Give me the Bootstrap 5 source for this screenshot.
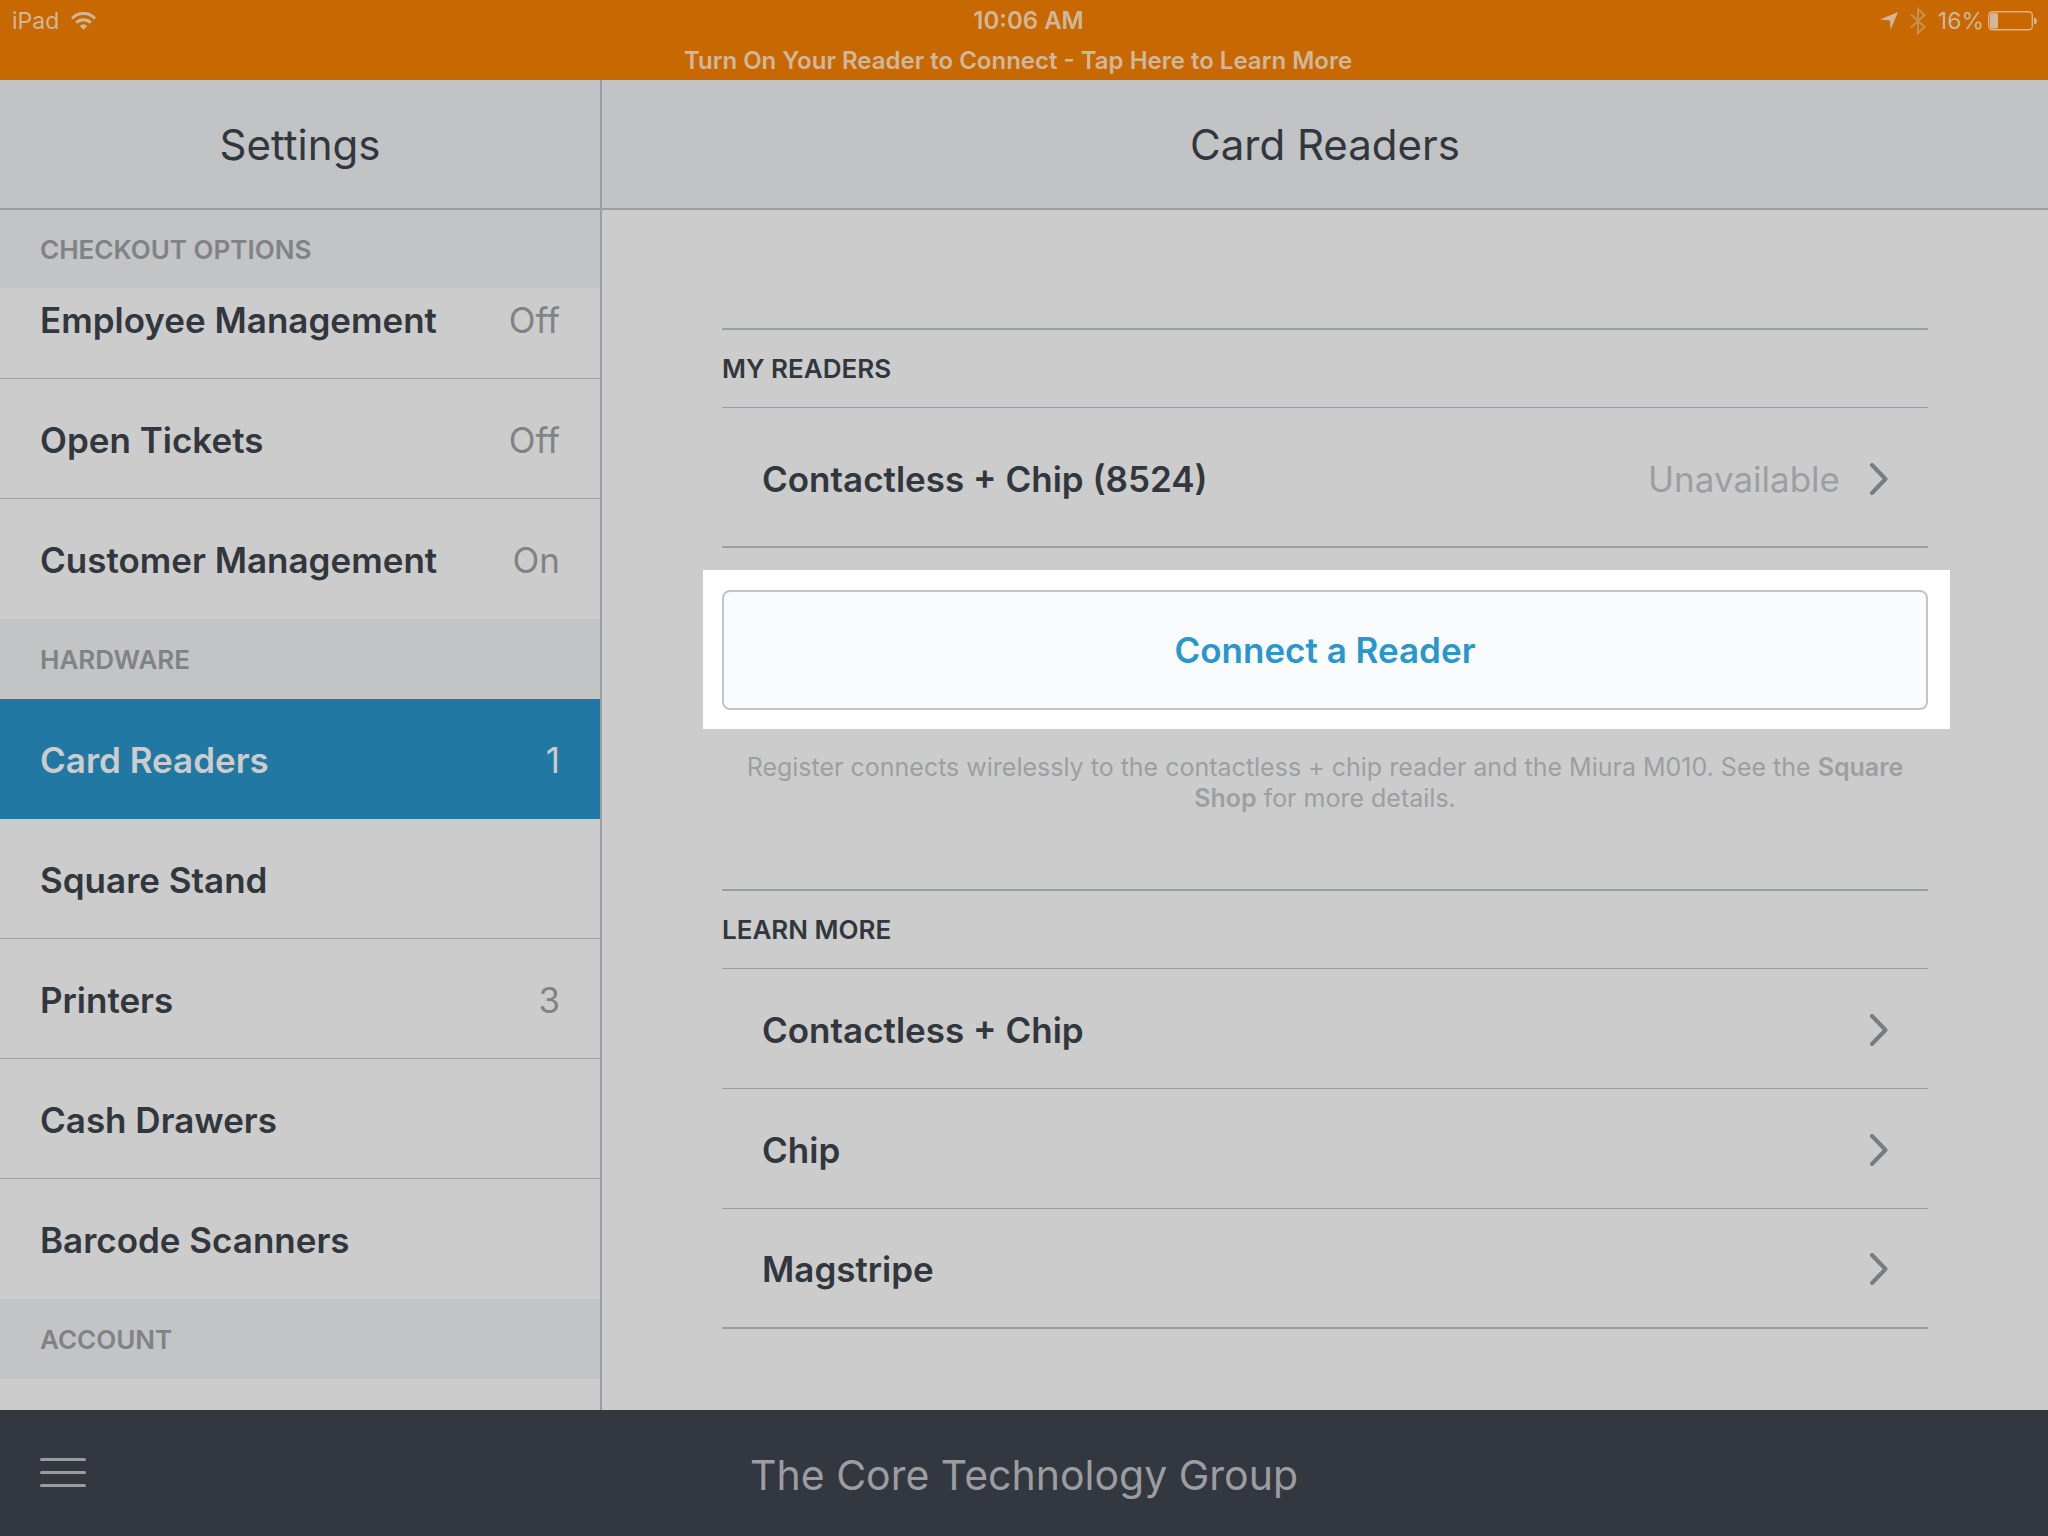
<!DOCTYPE html>
<html lang="en">
<head>
<meta charset="utf-8">
<meta name="viewport" content="width=device-width, initial-scale=1">
<title>Settings – Card Readers</title>
<link href="https://cdn.jsdelivr.net/npm/bootstrap@5.3.0/dist/css/bootstrap.min.css" rel="stylesheet">
<style>
  :root { --ink: #31373d; --line: #9a9ea3; --muted: #7f8385; --soft: #9b9fa3; --page: #ccc; --bar: #c2c3c5; }
  body { font-family: Inter, "Liberation Sans", sans-serif; background: var(--page); color: var(--ink); }
  a { color: inherit; text-decoration: none; }
  svg { display: block; flex: none; }

  .status { background: #c86800; color: #d0b79b; font-size: 23px; line-height: 42px; }
  .status-side { flex: 1 1 0; }
  .status-icons { gap: 12px; padding-right: 11px; }
  .notice { font-weight: 600; font-size: 24px; }
  .notice-bar { line-height: 38px; padding-right: 12px; }

  .sidebar { width: 602px; border-right: 2px solid var(--line); }
  .title-bar { height: 130px; padding-top: 2px; background: var(--bar); border-bottom: 2px solid var(--line); }
  .title-bar h1 { font-size: 42px; line-height: 48px; font-weight: 400; }

  .group-label { height: 80px; padding: 0 40px; background: #c3c4c6; color: var(--muted); font-size: 26px; font-weight: 600; }
  .group-label.pinned { height: 78px; margin-bottom: -29px; }
  .setting { height: 120px; padding: 2px 40px 0; font-size: 35px; line-height: 44px; font-weight: 600; border-bottom: 1px solid var(--line); }
  .setting.last { border-bottom: 0; }
  .setting.current { background: #2178a3; color: var(--page); border-bottom: 0; }
  .setting .state { font-weight: 400; color: var(--muted); }
  .setting.current .state { color: var(--page); }

  .detail { padding: 118px 120px 80px; }
  .reader-list { border-top: 2px solid var(--line); border-bottom: 2px solid var(--line); }
  .reader-list h2 { height: 77px; font-size: 26px; font-weight: 600; }
  .reader-row { height: 120px; padding: 2px 40px 0; border-top: 1px solid var(--line); font-size: 35px; line-height: 44px; font-weight: 600; }
  .reader-row:last-child { height: 119px; }
  .reader-row.tall { height: 139px; padding-top: 4px; }
  .reader-row .state { font-weight: 400; color: var(--soft); margin-right: 30px; }
  .spotlight { background: #fff; margin: 22px -22px 0 -19px; padding: 20px 22px 19px 19px; }
  .connect { --bs-btn-bg: #fafbfd; --bs-btn-color: #2996cc; --bs-btn-border-color: #c1c5ca; --bs-btn-border-width: 2px; --bs-btn-border-radius: 8px; --bs-btn-font-size: 35px; --bs-btn-font-weight: 600; height: 120px; }
  .hint { font-size: 25px; line-height: 31px; color: var(--soft); margin: 23px 0 75px; }
  .hint a { font-weight: 600; }

  .dock { height: 126px; background: #33373f; color: #9b9da1; font-size: 41px; line-height: 48px; padding: 0 40px; }
  .dock-side { flex: 1 1 0; }
  .dock-name { padding-top: 4px; }
</style>
<script src="https://cdn.jsdelivr.net/npm/bootstrap@5.3.0/dist/js/bootstrap.bundle.min.js" defer></script>
</head>
<body class="d-flex flex-column min-vh-100">

<svg class="d-none" aria-hidden="true">
  <symbol id="chevron" viewBox="0 0 18 32"><path d="M2 2 L15.500 16 L2 30" fill="none" stroke="#757d82" stroke-width="4" stroke-linecap="round" stroke-linejoin="round"/></symbol>
</svg>

<header class="status">
  <div class="d-flex">
    <div class="status-side d-flex align-items-center gap-2 ps-2 ms-1">
      <span>iPad</span>
      <svg class="ms-1" width="25" height="18" viewBox="0 0 25 18" fill="none" stroke="currentColor" stroke-width="3" aria-label="Wi-Fi"><path d="M1 6.500 A16 16 0 0 1 24 6.500"/><path d="M5.200 10.800 A10.300 10.300 0 0 1 19.800 10.800"/><path d="M12.500 18 L8.700 13.800 A5.500 5.500 0 0 1 16.300 13.800 Z" fill="currentColor" stroke="none"/></svg>
    </div>
    <div class="notice ps-2">10:06 AM</div>
    <div class="status-side status-icons d-flex align-items-center justify-content-end">
      <svg width="18" height="18" viewBox="0 0 18 18" fill="currentColor" aria-label="Location"><path d="M18 0 L0 7.500 L10 8.500 L10.500 18 Z"/></svg>
      <svg width="16" height="28" viewBox="0 0 16 28" fill="none" stroke="currentColor" stroke-width="2" opacity=".5" aria-label="Bluetooth"><path d="M1 7.500 L14.500 20 L8 26 V2 L14.500 8 L1 20.500"/></svg>
      <div class="d-flex align-items-center">
        <span>16%</span>
        <svg class="ms-1" width="49" height="20" viewBox="0 0 49 20" aria-label="Battery"><rect x=".7" y=".7" width="43.600" height="18" rx="3.500" fill="none" stroke="currentColor" stroke-width="1.400"/><rect x="2" y="2" width="8" height="15.500" rx="1.500" fill="currentColor"/><path d="M46 6.500 Q49 7 49 10 Q49 13 46 13.500 Z" fill="currentColor"/></svg>
      </div>
    </div>
  </div>
  <div class="notice-bar text-center"><a href="#learn" class="notice">Turn On Your Reader to Connect - Tap Here to Learn More</a></div>
</header>

<div class="d-flex flex-grow-1">
  <nav class="sidebar flex-shrink-0" aria-label="Settings">
    <div class="title-bar d-flex align-items-center justify-content-center"><h1 class="m-0">Settings</h1></div>
    <div class="group-label pinned d-flex align-items-center position-relative z-1">CHECKOUT OPTIONS</div>
    <a href="#" class="setting d-flex align-items-center justify-content-between">Employee Management<span class="state">Off</span></a>
    <a href="#" class="setting d-flex align-items-center justify-content-between">Open Tickets<span class="state">Off</span></a>
    <a href="#" class="setting last d-flex align-items-center justify-content-between">Customer Management<span class="state">On</span></a>
    <div class="group-label d-flex align-items-center">HARDWARE</div>
    <a href="#" class="setting current d-flex align-items-center justify-content-between" aria-current="page">Card Readers<span class="state">1</span></a>
    <a href="#" class="setting d-flex align-items-center justify-content-between">Square Stand</a>
    <a href="#" class="setting d-flex align-items-center justify-content-between">Printers<span class="state">3</span></a>
    <a href="#" class="setting d-flex align-items-center justify-content-between">Cash Drawers</a>
    <a href="#" class="setting last d-flex align-items-center justify-content-between">Barcode Scanners</a>
    <div class="group-label d-flex align-items-center">ACCOUNT</div>
  </nav>

  <main class="flex-grow-1">
    <div class="title-bar d-flex align-items-center justify-content-center"><h1 class="m-0">Card Readers</h1></div>
    <div class="detail">
      <section class="reader-list">
        <h2 class="m-0 d-flex align-items-center">MY READERS</h2>
        <a href="#" class="reader-row tall d-flex align-items-center"><span class="me-auto">Contactless + Chip (8524)</span><span class="state">Unavailable</span><svg width="18" height="32"><use href="#chevron"/></svg></a>
      </section>
      <div class="spotlight"><button type="button" class="btn connect w-100">Connect a Reader</button></div>
      <p class="hint text-center">Register connects wirelessly to the contactless + chip reader and the Miura M010. See the <a href="#">Square Shop</a> for more details.</p>
      <section class="reader-list" id="learn">
        <h2 class="m-0 d-flex align-items-center">LEARN MORE</h2>
        <a href="#" class="reader-row d-flex align-items-center"><span class="me-auto">Contactless + Chip</span><svg width="18" height="32"><use href="#chevron"/></svg></a>
        <a href="#" class="reader-row d-flex align-items-center"><span class="me-auto">Chip</span><svg width="18" height="32"><use href="#chevron"/></svg></a>
        <a href="#" class="reader-row d-flex align-items-center"><span class="me-auto">Magstripe</span><svg width="18" height="32"><use href="#chevron"/></svg></a>
      </section>
    </div>
  </main>
</div>

<footer class="dock d-flex align-items-center">
  <div class="dock-side d-flex"><button type="button" class="btn p-0 border-0" aria-label="Menu"><svg width="46" height="30" viewBox="0 0 46 30" stroke="#9b9b9d" stroke-width="3" stroke-linecap="round"><path d="M1.500 1.500H44.500M1.500 14.500H44.500M1.500 27.500H44.500"/></svg></button></div>
  <div class="dock-name">The Core Technology Group</div>
  <div class="dock-side"></div>
</footer>
</body>
</html>
